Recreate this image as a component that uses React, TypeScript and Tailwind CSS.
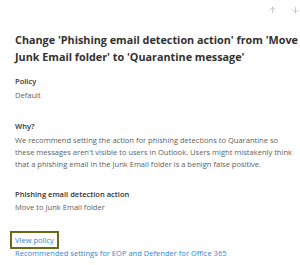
import { ArrowUp, ArrowDown } from 'lucide-react';

const App = () => {
  return (
    <div className="h-[265px] w-[300px] overflow-hidden bg-white font-['Open_Sans',sans-serif] text-[#323130]">
      <div className="flex h-[18px] items-center gap-[14px] pl-[268px] pt-[1px] text-[#8a8886]">
        <ArrowUp size={10} strokeWidth={1.2} />
        <ArrowDown size={10} strokeWidth={1.2} />
      </div>
      <h1 className="mt-[13px] whitespace-nowrap pl-[15px] text-[10.8px] font-bold leading-[17px]">
        Change 'Phishing email detection action' from 'Move
        <br />
        Junk Email folder' to 'Quarantine message'
      </h1>
      <div className="mt-[10px] pl-[15px] text-[7.55px] leading-[12px]">
        <div className="font-semibold">Policy</div>
        <div className="mt-[2px] text-[#605e5c]">Default</div>
        <div className="mt-[19px] font-semibold">Why?</div>
        <p className="mt-[2px] whitespace-nowrap text-[#605e5c]">
          We recommend setting the action for phishing detections to Quarantine so
          <br />
          these messages aren't visible to users in Outlook. Users might mistakenly think
          <br />
          that a phishing email in the Junk Email folder is a benign false positive.
        </p>
        <div className="mt-[18px] font-semibold">Phishing email detection action</div>
        <div className="mt-[1px] text-[#605e5c]">Move to Junk Email folder</div>
        <a className="-ml-[5px] mt-[18px] inline-block border-2 border-[#6b6a17] px-[3px] py-[1px] text-[#2b88d8]">
          View policy
        </a>
        <div className="-mt-[2px] text-[#2b88d8]">Recommended settings for EOP and Defender for Office 365</div>
      </div>
    </div>
  );
};

export default App;
